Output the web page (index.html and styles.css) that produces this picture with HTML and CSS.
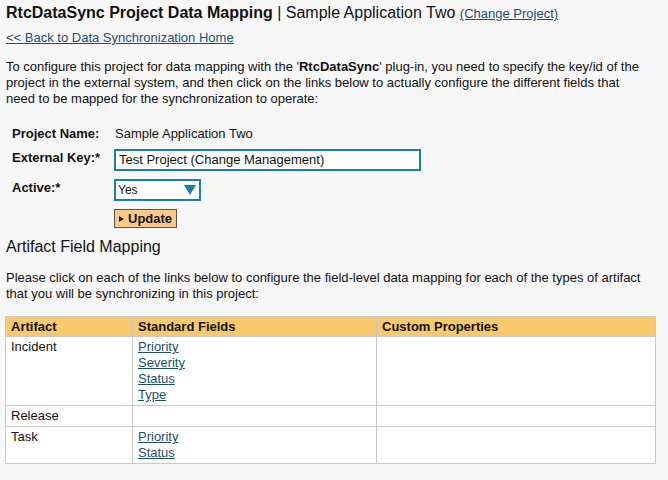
FILE: index.html
```html
<!DOCTYPE html>
<html>
<head>
<meta charset="utf-8">
<link rel="stylesheet" href="styles.css">
</head>
<body>
<div class="title"><b>RtcDataSync Project Data Mapping</b> | Sample Application Two <a class="change" href="#">(Change Project)</a></div>
<div class="back"><a href="#">&lt;&lt; Back to Data Synchronization Home</a></div>
<p class="intro">To configure this project for data mapping with the '<b>RtcDataSync</b>' plug-in, you need to specify the key/id of the project in the external system, and then click on the links below to actually configure the different fields that need to be mapped for the synchronization to operate:</p>
<div class="form">
  <div class="lbl lbl-name">Project Name:</div>
  <div class="val val-name">Sample Application Two</div>
  <div class="lbl">External Key:*</div>
  <div class="val"><div class="input">Test Project (Change Management)</div></div>
  <div class="lbl">Active:*</div>
  <div class="val"><div class="select"><span>Yes</span><svg width="12" height="10" viewBox="0 0 12 10"><path d="M0 0H12L6 10Z" fill="#1a7fab"/></svg></div></div>
  <div class="lbl"></div>
  <div class="val"><div class="btn"><svg width="5" height="6" viewBox="0 0 5 6"><path d="M0 0L5 3L0 6Z" fill="#222"/></svg>Update</div></div>
</div>
<div class="h2">Artifact Field Mapping</div>
<p class="desc">Please click on each of the links below to configure the field-level data mapping for each of the types of artifact that you will be synchronizing in this project:</p>
<table class="grid">
  <tr><th class="c1">Artifact</th><th class="c2">Standard Fields</th><th class="c3">Custom Properties</th></tr>
  <tr><td>Incident</td><td><a class="fl" href="#">Priority</a><a class="fl" href="#">Severity</a><a class="fl" href="#">Status</a><a class="fl" href="#">Type</a></td><td></td></tr>
  <tr><td>Release</td><td></td><td></td></tr>
  <tr><td>Task</td><td><a class="fl" href="#">Priority</a><a class="fl" href="#">Status</a></td><td></td></tr>
</table>
</body>
</html>
```
FILE: styles.css
```css
html, body {
  background: #f7f7f7;
}
body {
  margin: 0;
  padding: 0 6px;
  font-family: "Liberation Sans", Arial, sans-serif;
  font-size: 13px;
  color: #111;
}
a {
  color: #1d4f6f;
  text-decoration: underline;
}
.title {
  margin-top: 3px;
  font-size: 16px;
  line-height: 20px;
  color: #111;
}
.change {
  font-size: 13px;
}
.back {
  margin-top: 6px;
  line-height: 16px;
}
.intro {
  margin: 13px 0 0;
  line-height: 16px;
  padding-right: 20px;
}
.form {
  display: grid;
  grid-template-columns: 102px auto;
  justify-content: start;
  margin: 19px 0 0 6px;
  row-gap: 8px;
}
.lbl {
  font-weight: bold;
  line-height: 16px;
  padding-top: 1px;
}
.lbl-name {
  padding-top: 0;
  margin-bottom: -1px;
}
.val-name {
  padding-left: 1px;
  line-height: 16px;
  margin-bottom: -1px;
}
.input {
  width: 300px;
  height: 18px;
  border: 2px solid #1a7fab;
  background: #fff;
  font-size: 13px;
  line-height: 18px;
  padding-left: 3px;
  box-sizing: content-box;
}
.select {
  width: 78px;
  height: 18px;
  border: 2px solid #1a7fab;
  background: #fff;
  display: flex;
  align-items: center;
  justify-content: space-between;
  padding: 0 3px 0 2px;
  font-size: 12px;
}
.btn {
  display: inline-flex;
  align-items: center;
  gap: 4px;
  height: 17px;
  padding: 0 4px 0 4px;
  border: 1px solid #555;
  background: #fbc98c;
  font-weight: bold;
  font-size: 13px;
}
.h2 {
  margin-top: 9px;
  font-size: 16px;
  line-height: 20px;
}
.desc {
  margin: 13px 0 0;
  line-height: 16px;
  padding-right: 20px;
}
.grid {
  margin-top: 14px;
  border-collapse: collapse;
  width: 651px;
  margin-left: -1px;
  background: #fff;
  border: 1px solid #c8c8c8;
}
.grid th {
  background: #f8c96c;
  text-align: left;
  font-weight: bold;
  height: 19px;
  line-height: 16px;
  padding: 0 5px;
  border: 1px solid #c8c8c8;
}
.grid td {
  vertical-align: top;
  line-height: 16px;
  padding: 2px 5px 2px;
  border: 1px solid #c8c8c8;
}
.fl {
  display: block;
  width: max-content;
  line-height: 16px;
}
.c1 { width: 116px; }
.c2 { width: 233px; }
```
